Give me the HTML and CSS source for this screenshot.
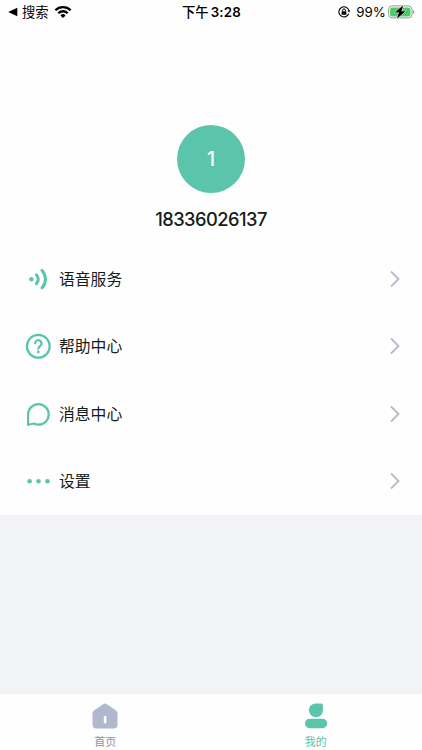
FILE: index.html
```html
<!DOCTYPE html>
<html lang="zh-CN">
<head>
<meta charset="utf-8">
<meta name="viewport" content="width=device-width, initial-scale=1">
<title>我的</title>
<link rel="stylesheet" href="styles.css">
</head>
<body>
<div class="app">
  <header class="status">
    <div class="status-left">
      <svg width="10" height="10" viewBox="0 0 10 10"><path d="M0.2 5 9.3.8v8.4z"/></svg>
      <span class="back">搜索</span>
      <svg class="wifi" width="18" height="14" viewBox="0 0 18 14" fill="none" stroke="#000" stroke-width="2.3"><path d="M1.4 5.2a10.8 10.8 0 0 1 15.2 0M4.3 8.2a6.7 6.7 0 0 1 9.4 0"/><path d="M9 13 6.4 10.4a3.7 3.7 0 0 1 5.2 0z" fill="#000" stroke="none"/></svg>
    </div>
    <div class="time"><span class="period">下午</span><span>3:28</span></div>
    <div class="status-right">
      <svg width="12" height="12" viewBox="0 0 12 12"><path d="M10.7 7.8A5.1 5.1 0 1 1 11 5" fill="none" stroke="#000" stroke-width="1.1"/><path d="m9.5 4.5 2.5-.2-.8 2.4z"/><rect x="3.6" y="5.2" width="4.8" height="3.6" rx=".6"/><path d="M4.6 5.4V4.3a1.4 1.4 0 0 1 2.8 0v1.1" fill="none" stroke="#000"/></svg>
      <span class="percent">99%</span>
      <svg class="battery" width="27" height="14" viewBox="0 0 27 14"><rect x=".6" y=".9" width="23.4" height="12" rx="3.5" fill="#fff" stroke="#8f9994"/><rect x="2.1" y="2.4" width="20.4" height="9" rx="2.2" fill="#4bca68"/><path d="M25 5v4q1.4-.5 1.4-2T25 5z" fill="#999"/><path d="M15.2.2 6.8 7.6h4.1L8.8 13.8l8.9-7.5h-4.2z" stroke="#fff" stroke-width="1" paint-order="stroke"/></svg>
    </div>
  </header>

  <main>
    <section class="profile">
      <div class="avatar">1</div>
      <div class="phone">18336026137</div>
    </section>
    <nav class="menu">
      <a class="row">
        <svg class="icon" viewBox="0 0 26 26" fill="none" stroke="#5ac5aa" stroke-width="3" stroke-linecap="round"><circle cx="6.4" cy="13.2" r="2.2" fill="#5ac5aa" stroke="none"/><path d="M11.4 8.8a6.2 6.2 0 0 1 0 8.8M17 4.4a13 13 0 0 1 0 17.6"/></svg>
        <span class="label">语音服务</span>
        <svg class="chevron" viewBox="0 0 10 18"><path d="m1 1.5 7.5 7.5L1 16.5"/></svg>
      </a>
      <a class="row">
        <svg class="icon" viewBox="0 0 26 26" fill="none" stroke="#5ac5aa" stroke-width="2.2" stroke-linecap="round" stroke-linejoin="round"><circle cx="13.3" cy="13.3" r="11.4"/><path d="M10.1 10.3a3.2 3.2 0 1 1 5.2 2.6c-1.3 1-2 1.4-2 2.8"/><circle cx="13.3" cy="19" r="1.4" fill="#5ac5aa" stroke="none"/></svg>
        <span class="label">帮助中心</span>
        <svg class="chevron" viewBox="0 0 10 18"><path d="m1 1.5 7.5 7.5L1 16.5"/></svg>
      </a>
      <a class="row">
        <svg class="icon" viewBox="0 0 26 26" fill="none" stroke="#5ac5aa" stroke-width="2.2" stroke-linejoin="round"><path d="M3.1 23.8V13.4a10.3 10.3 0 1 1 10.3 10.3c-1.7 0-3.2-.5-4.6-1.2-1.7.3-3.6 1-5.7 1.3z"/></svg>
        <span class="label">消息中心</span>
        <svg class="chevron" viewBox="0 0 10 18"><path d="m1 1.5 7.5 7.5L1 16.5"/></svg>
      </a>
      <a class="row">
        <svg class="icon" viewBox="0 0 26 26" fill="#5ac5aa"><circle cx="4.6" cy="13.2" r="2.3"/><circle cx="13.5" cy="13.2" r="2.3"/><circle cx="22.5" cy="13.2" r="2.3"/></svg>
        <span class="label">设置</span>
        <svg class="chevron" viewBox="0 0 10 18"><path d="m1 1.5 7.5 7.5L1 16.5"/></svg>
      </a>
    </nav>
  </main>

  <footer class="tabs">
    <a class="tab">
      <svg width="26" height="26" viewBox="0 0 26 26"><path d="M11.2 1.2a3.2 3.2 0 0 1 3.6 0l9 6.1q1.7 1.2 1.7 3.2v11q0 4-4 4h-17q-4 0-4-4v-11q0-2 1.7-3.2z" fill="#b1b8cb"/><rect x="11.8" y="13" width="2.6" height="7.4" rx="1.1" fill="#fff"/></svg>
      <span>首页</span>
    </a>
    <a class="tab active">
      <svg width="26" height="26" viewBox="0 0 26 26" fill="#5ac5aa"><path d="M12.2.4h6.2q1.5 0 1.5 1.5v5.4a7 7 0 1 1-7.7-6.9z"/><rect x="2" y="15.7" width="22.2" height="9.5" rx="4.7"/></svg>
      <span>我的</span>
    </a>
  </footer>
</div>
</body>
</html>
```
FILE: styles.css
```css
* { box-sizing: border-box; }

body {
  margin: 0;
  background: #f2f3f7;
  color: #141c1a;
  font-family: Inter, "Noto Sans CJK SC", sans-serif;
}

.app {
  height: 750px;
  display: flex;
  flex-direction: column;
}

.status {
  height: 24px;
  flex: none;
  display: grid;
  grid-template-columns: 1fr auto 1fr;
  align-items: center;
  padding: 0 7px 0 8px;
  background: #fefefe;
  color: #000;
  font-size: 13.3px;
  line-height: 24px;
}

.status-left,
.status-right,
.time {
  display: flex;
  align-items: center;
}

.back { margin-left: 4px; }
.wifi { margin-left: 5px; }

.time {
  gap: 2px;
  font-weight: 600;
  letter-spacing: .2px;
}

.period { font-weight: 500; letter-spacing: 0; }
.status-right { justify-content: flex-end; }
.percent { margin-left: 6px; letter-spacing: .1px; }
.battery { margin-left: 2px; }

main {
  flex: none;
  height: 491px;
  background: #fefefe;
}

.profile {
  height: 221px;
  padding-top: 101px;
  display: flex;
  flex-direction: column;
  align-items: center;
}

.avatar {
  width: 68px;
  height: 68px;
  border-radius: 50%;
  background: #5ac5aa;
  color: #fff;
  font-size: 19.5px;
  font-weight: 500;
  line-height: 68px;
  text-align: center;
}

.phone {
  margin-top: 13px;
  font-size: 18.3px;
  font-weight: 450;
  letter-spacing: -.55px;
  line-height: 26px;
}

.row {
  height: 67.5px;
  display: flex;
  align-items: center;
  padding: 0 22px 0 25px;
}

.icon { width: 26px; height: 26px; }

.label {
  flex: 1;
  margin-left: 8px;
  padding-top: 2px;
  font-size: 15.8px;
  line-height: 24px;
}

.chevron {
  width: 10px;
  height: 18px;
  fill: none;
  stroke: #b6bbc9;
  stroke-width: 1.8;
}

.tabs {
  height: 56px;
  margin-top: auto;
  display: flex;
  padding-right: 1px;
  background: #fefefe;
}

.tab {
  flex: 1;
  display: flex;
  flex-direction: column;
  align-items: center;
  padding-top: 9px;
  color: #8f9297;
  font-size: 11px;
  line-height: 16px;
}

.tab span { margin-top: 5px; }
.active { color: #5ac5aa; }
```
